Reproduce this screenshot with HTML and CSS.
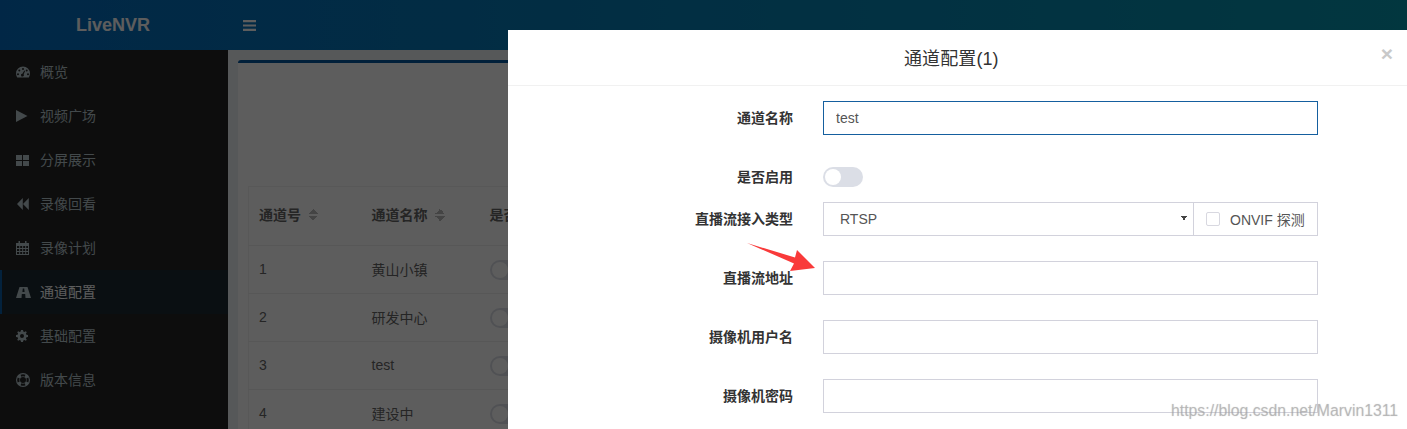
FILE: index.html
```html
<!DOCTYPE html>
<html lang="zh-CN">
<head>
<meta charset="utf-8">
<title>LiveNVR</title>
<link rel="stylesheet" href="styles.css">
</head>
<body>
<div class="app">
  <header class="topbar">
    <div class="brand">LiveNVR</div>
    <svg class="bars" width="13" height="11" viewBox="0 0 13 11"><path d="M0 0h13v2.2H0zM0 4.4h13v2.2H0zM0 8.8h13V11H0z"/></svg>
  </header>
  <div class="shell">
    <nav class="sidebar">
      <a class="nav-item"><span class="nav-icon"><svg width="14" height="12" viewBox="0 0 14 12"><path fill-rule="evenodd" d="M7 .5A7 7 0 0 1 14 7.5c0 1.5-.4 2.8-1.200 4H1.200C.4 10.300 0 9 0 7.500A7 7 0 0 1 7 .5zM7 2a1 1 0 1 0 0 2 1 1 0 0 0 0-2zM3.300 3.600a1 1 0 1 0 0 2 1 1 0 0 0 0-2zM10.700 3.600a1 1 0 1 0 0 2 1 1 0 0 0 0-2zM2 7.200a1 1 0 1 0 0 2 1 1 0 0 0 0-2zM12 7.200a1 1 0 1 0 0 2 1 1 0 0 0 0-2zM8.300 4.500 6.400 7.700a1.400 1.400 0 1 0 1.200.6L9.100 5z"/></svg></span>概览</a>
      <a class="nav-item"><span class="nav-icon"><svg width="12" height="12" viewBox="0 0 12 12"><path d="M0 0l11.500 6L0 12z"/></svg></span>视频广场</a>
      <a class="nav-item"><span class="nav-icon"><svg width="13" height="11" viewBox="0 0 13 11"><path d="M0 0h6v5H0zM7 0h6v5H7zM0 6h6v5H0zM7 6h6v5H7z"/></svg></span>分屏展示</a>
      <a class="nav-item"><span class="nav-icon"><svg width="13" height="12" viewBox="0 0 13 12"><path d="M1 6l5.800-6v12zM7 6l5.800-6v12z"/></svg></span>录像回看</a>
      <a class="nav-item"><span class="nav-icon"><svg width="13" height="14" viewBox="0 0 13 14"><path fill-rule="evenodd" d="M2.500 0h1.500v2h5V0h1.500v2H13v12H0V2h2.500zM1 5v2h2.200V5zM4.200 5v2h2V5zM7.200 5v2h2V5zM10.200 5v2H12V5zM1 8v2h2.200V8zM4.200 8v2h2V8zM7.200 8v2h2V8zM10.200 8v2H12V8zM1 11v2h2.200v-2zM4.200 11v2h2v-2zM7.200 11v2h2v-2zM10.200 11v2H12v-2z"/></svg></span>录像计划</a>
      <a class="nav-item is-active"><span class="nav-icon"><svg width="15" height="11" viewBox="0 0 15 11"><path fill-rule="evenodd" d="M3.500 0h8L15 11H9.500L9.200 7H5.800L5.500 11H0zM6.800 1.500 6.400 5h2.200l-.4-3.500z"/></svg></span>通道配置</a>
      <a class="nav-item"><span class="nav-icon"><svg width="12" height="12" viewBox="0 0 12 12"><path fill-rule="evenodd" d="M5 0h2l.3 1.600 1.100.5L9.800 1.200l1 1-.9 1.400.5 1.100L12 5v2l-1.600.3-.5 1.100.9 1.400-1 1-1.400-.9-1.100.5L7 12H5l-.3-1.600-1.100-.5-1.400.9-1-1 .9-1.400-.5-1.100L0 7V5l1.600-.3.5-1.100-.9-1.400 1-1 1.400.9 1.100-.5zM6 4a2 2 0 1 0 0 4 2 2 0 0 0 0-4z"/></svg></span>基础配置</a>
      <a class="nav-item"><span class="nav-icon"><svg width="14" height="14" viewBox="0 0 14 14"><path fill-rule="evenodd" d="M7 0a7 7 0 1 1 0 14A7 7 0 0 1 7 0zM7 4a3 3 0 1 0 0 6 3 3 0 0 0 0-6zM4.500 1.700 5.400 3.700a3.800 3.800 0 0 1 3.200 0l.9-2a6 6 0 0 0-5 0zM1.700 4.500a6 6 0 0 0 0 5l2-.9a3.800 3.800 0 0 1 0-3.200zM12.300 4.500l-2 .9a3.800 3.800 0 0 1 0 3.200l2 .9a6 6 0 0 0 0-5zM5.400 10.300l-.9 2a6 6 0 0 0 5 0l-.9-2a3.800 3.800 0 0 1-3.200 0z"/></svg></span>版本信息</a>
    </nav>
    <main class="content">
      <section class="panel">
        <table class="channels">
          <thead>
            <tr>
              <th class="col-id">通道号<i class="sort"></i></th>
              <th class="col-name">通道名称<i class="sort"></i></th>
              <th>是否启用</th>
            </tr>
          </thead>
          <tbody>
            <tr><td>1</td><td>黄山小镇</td><td><span class="toggle"><span class="toggle-knob"></span></span></td></tr>
            <tr><td>2</td><td>研发中心</td><td><span class="toggle"><span class="toggle-knob"></span></span></td></tr>
            <tr><td>3</td><td>test</td><td><span class="toggle"><span class="toggle-knob"></span></span></td></tr>
            <tr><td>4</td><td>建设中</td><td><span class="toggle"><span class="toggle-knob"></span></span></td></tr>
          </tbody>
        </table>
      </section>
    </main>
  </div>
</div>

<div class="mask"></div>

<div class="modal">
  <div class="modal-head">
    <h4 class="modal-title">通道配置(1)</h4>
    <span class="modal-close">×</span>
  </div>
  <form class="modal-body">
    <div class="row">
      <label class="row-label">通道名称</label>
      <input class="field is-focus" type="text" value="test">
    </div>
    <div class="row is-tight">
      <label class="row-label">是否启用</label>
      <span class="toggle"><span class="toggle-knob"></span></span>
    </div>
    <div class="row">
      <label class="row-label">直播流接入类型</label>
      <div class="group">
        <select class="group-select"><option>RTSP</option></select>
        <div class="group-addon"><span class="check"></span>ONVIF 探测</div>
      </div>
    </div>
    <div class="row">
      <label class="row-label">直播流地址</label>
      <input class="field" type="text">
    </div>
    <div class="row">
      <label class="row-label">摄像机用户名</label>
      <input class="field" type="text">
    </div>
    <div class="row">
      <label class="row-label">摄像机密码</label>
      <input class="field" type="text">
    </div>
  </form>
</div>

<svg class="arrow" width="70" height="30" viewBox="0 0 70 30"><path d="M0 0 48 14.500 50 7 68 25 43 28 47 20.500z"/></svg>
<div class="watermark">https://blog.csdn.net/Marvin1311</div>
</body>
</html>
```
FILE: styles.css
```css
* { box-sizing: border-box; }
html, body { margin: 0; height: 429px; overflow: hidden; }
body {
  font-family: "Liberation Sans", "Noto Sans CJK SC", sans-serif;
  font-size: 14px;
  color: #666;
  background: #ecf0f5;
}
.app { height: 429px; overflow: hidden; }

.topbar {
  height: 50px;
  display: flex;
  align-items: center;
  background: linear-gradient(90deg, #056cc0, #0896ae);
}
.brand {
  width: 226px;
  text-align: center;
  font-size: 18px;
  font-weight: 700;
  color: #fff;
}
.bars { margin-left: 17px; fill: #fff; }

.shell { display: flex; height: 379px; }
.sidebar { width: 228px; flex: none; background: #242424; }
.nav-item {
  height: 44px;
  display: flex;
  align-items: center;
  padding: 0 0 2px 16px;
  color: #b8c7ce;
}
.nav-icon { width: 24px; margin-top: 2px; display: flex; align-items: center; }
.nav-icon svg { fill: #b8c7ce; }
.nav-item.is-active {
  background: #1c2a32;
  color: #fff;
  box-shadow: inset 2px 0 0 #0a5fa8;
}

.content { flex: 1; min-width: 0; padding: 10px; }
.panel {
  height: 400px;
  background: #fff;
  border-top: 3px solid #05589f;
  border-radius: 3px;
  padding: 123px 10px 0;
}
.channels { width: 1130px; border-collapse: collapse; table-layout: fixed; border: 1px solid #f0f0f0; }
.channels th, .channels td { padding: 0 10px 2px; text-align: left; }
.channels th { padding-bottom: 4px; }
.channels td .toggle { margin-top: 2px; }
.channels thead tr { height: 59px; }
.channels tbody tr { height: 48px; border-top: 1px solid #eee; }
.col-id { width: 113px; }
.col-name { width: 118px; }
.sort {
  display: inline-block;
  width: 10px;
  height: 12px;
  margin-left: 7px;
  vertical-align: -1px;
  background:
    linear-gradient(to top left, #bbb 50%, transparent 50%) left top / 5px 5px no-repeat,
    linear-gradient(to top right, #bbb 50%, transparent 50%) right top / 5px 5px no-repeat,
    linear-gradient(to bottom left, #bbb 50%, transparent 50%) left bottom / 5px 5px no-repeat,
    linear-gradient(to bottom right, #bbb 50%, transparent 50%) right bottom / 5px 5px no-repeat;
}

.mask { position: fixed; inset: 0; background: rgba(0, 0, 0, .635); }

.modal {
  position: absolute;
  top: 30px;
  left: 508px;
  right: 0;
  height: 399px;
  overflow: hidden;
  background: #fff;
  color: #555;
}
.modal-head {
  height: 56px;
  display: flex;
  align-items: center;
  justify-content: space-between;
  padding: 0 14px 2px 396px;
  border-bottom: 1px solid #f1f1f1;
}
.modal-title { margin: 0; font-size: 18px; font-weight: 400; letter-spacing: .1px; color: #333; }
.modal-close { font-size: 21px; font-weight: 700; line-height: 1; color: #c9c9c9; margin-top: -7px; }
.modal-body { padding: 15px 89px 0 0; }
.row { display: flex; align-items: center; height: 34px; margin-bottom: 25px; }
.row.is-tight { margin-bottom: 8px; }
.row-label {
  width: 315px;
  flex: none;
  padding: 0 30px 2px 0;
  text-align: right;
  font-weight: 700;
  color: #333;
}
.field {
  flex: 1;
  min-width: 0;
  height: 34px;
  padding: 0 12px;
  border: 1px solid #d2d2dc;
  border-radius: 0;
  outline: 0;
  font: inherit;
  color: #555;
  background: #fff;
}
.field.is-focus { border-color: #155f9f; }
.toggle {
  display: block;
  width: 40px;
  height: 20px;
  border-radius: 10px;
  background: #dbdee6;
  padding: 2px;
}
.toggle-knob { display: block; width: 16px; height: 16px; border-radius: 50%; background: #fff; }
.group { flex: 1; min-width: 0; display: flex; height: 34px; }
.group-select {
  flex: 1;
  min-width: 0;
  height: 34px;
  padding: 0 16px;
  border: 1px solid #d2d2dc;
  border-radius: 0;
  outline: 0;
  font: inherit;
  color: #555;
  appearance: none;
  background:
    linear-gradient(to top right, transparent 50%, #444 50%) right 9px top 13px / 3px 5px no-repeat,
    linear-gradient(to top left, transparent 50%, #444 50%) right 6px top 13px / 3px 5px no-repeat,
    #fff;
}
.group-addon {
  width: 124px;
  flex: none;
  display: flex;
  align-items: center;
  padding-left: 12px;
  border: 1px solid #d2d2dc;
  border-left: 0;
  color: #555;
}
.check {
  width: 14px;
  height: 14px;
  margin-right: 10px;
  border: 1px solid #d8d8e0;
  border-radius: 2px;
}

.arrow { position: absolute; left: 747px; top: 243px; fill: #f93a3a; }
.watermark {
  position: absolute;
  left: 1171px;
  top: 402px;
  font-size: 15.800px;
  line-height: 18px;
  color: rgba(150, 150, 150, .45);
  text-shadow: 0 0 1px rgba(170, 170, 170, .6);
}
```
